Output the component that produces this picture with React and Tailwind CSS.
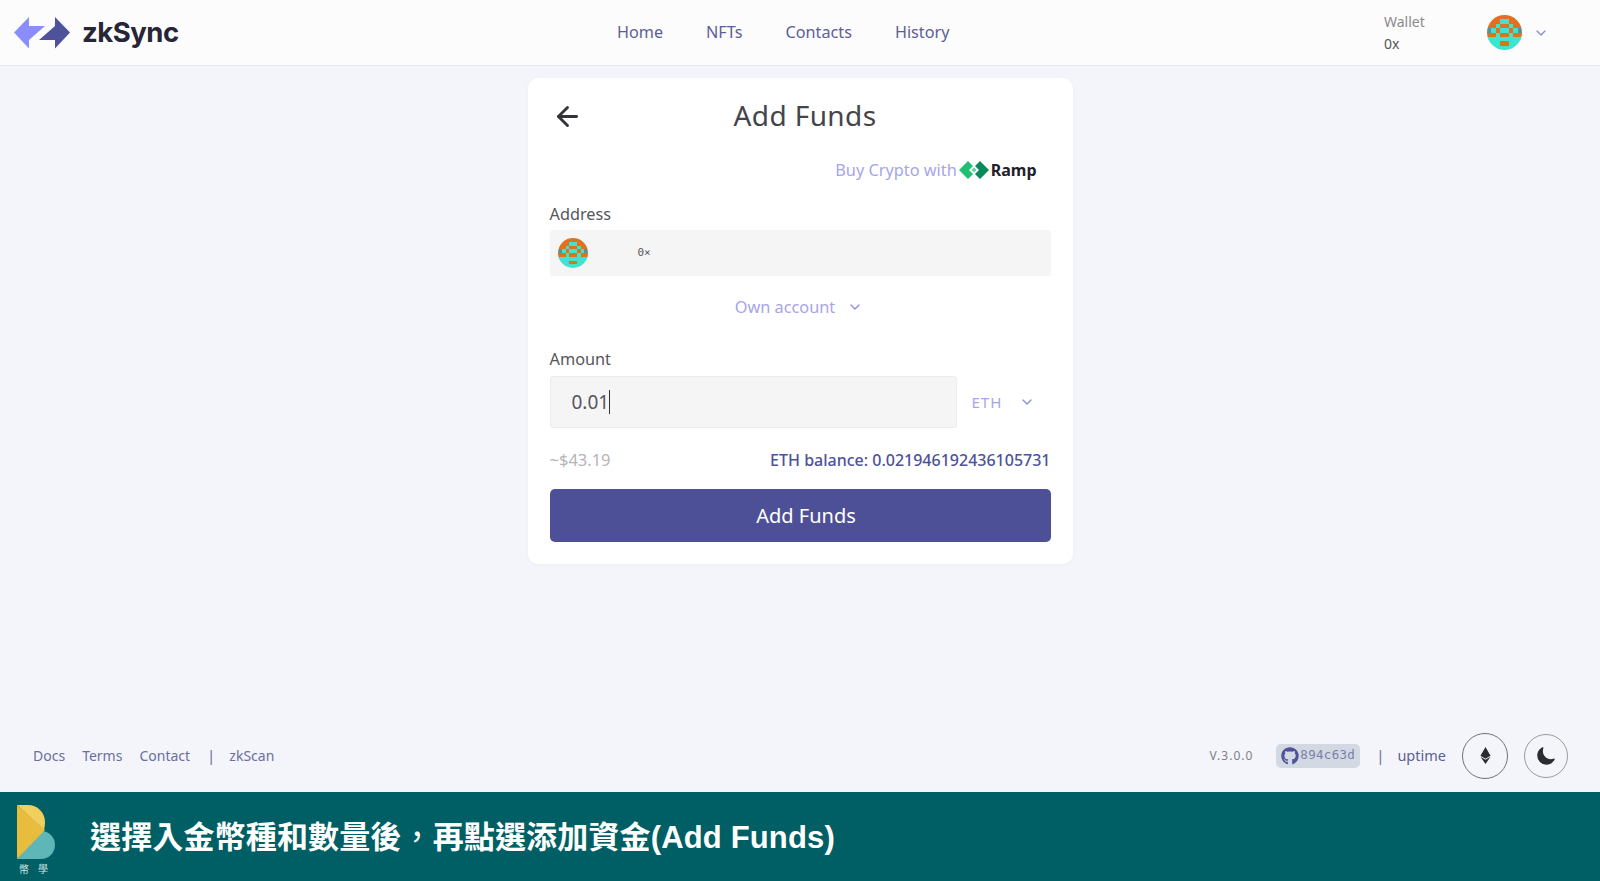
import { ArrowLeft, ChevronDown } from "lucide-react";
import { FaEthereum, FaGithub } from "react-icons/fa";
import { IoMoon } from "react-icons/io5";

const sans = "font-['Noto_Sans',sans-serif]";

const ICON_ROWS = [
  "OOOOOOOO",
  "OOOTTOOO",
  "OOTOOTOO",
  "GTOTTOTG",
  "OOTOOTOO",
  "TTTTTTTT",
  "TTTOOTTT",
  "TTTTTTTT",
];
const ICON_COLORS = { O: "#dd7320", T: "#3fe3cf", G: "#5f8f92" };

const Identicon = ({ className }) => (
  <svg viewBox="0 0 8 8" className={className} shapeRendering="crispEdges">
    <defs>
      <clipPath id="identicon-clip">
        <circle cx="4" cy="4" r="4" />
      </clipPath>
    </defs>
    <g clipPath="url(#identicon-clip)">
      {ICON_ROWS.map((row, y) =>
        row.split("").map((c, x) => (
          <rect key={`${x}-${y}`} x={x} y={y} width="1.02" height="1.02" fill={ICON_COLORS[c]} />
        ))
      )}
    </g>
  </svg>
);

const ZkLogo = () => (
  <svg viewBox="0 0 58 33" className="w-[58px] h-[33px]">
    <path d="M1 16.5 16 1v9h16L16 24v8.5z" fill="#8c8dfc" />
    <path d="M57 16.5 42 1v9L26 24h16v8.5z" fill="#4e529a" />
  </svg>
);

const RampLogo = () => (
  <svg viewBox="0 0 30 18" className="w-[30px] h-[18px]">
    <path d="M9 0 0 9l9 9 5-5-4-4 4-4z" fill="#21bf73" />
    <path d="M21 0l9 9-9 9-5-5 4-4-4-4z" fill="#0a8a5a" />
    <path d="M15 6.5l2.5 2.5-2.5 2.5-2.5-2.5z" fill="#5fd69c" />
  </svg>
);

const BanklessLogo = () => (
  <svg viewBox="0 0 38 54" className="w-[38px] h-[54px]">
    <path d="M0 54 24 26a14 14 0 0 1 0 28z" fill="#5fb6b6" />
    <path d="M0 0h11a17 17 0 0 1 17 17q0 4-1 8z" fill="#f0cf5e" />
    <path d="M0 0l28 25L0 54z" fill="#e8bc3c" />
  </svg>
);

const NavLink = ({ children }) => (
  <a className="text-[16.2px] text-[#5d6095]">{children}</a>
);

const FooterLink = ({ children, className = "" }) => (
  <a className={`text-[14px] text-[#6c6f9c] ${className}`}>{children}</a>
);

const Field = ({ children, className }) => (
  <div className={`bg-[#f5f5f5] rounded-[3px] flex items-center ${className}`}>{children}</div>
);

export default function App() {
  return (
    <div className={`min-h-screen flex flex-col bg-[#f3f5fa] ${sans}`}>
      <header className="h-[66px] shrink-0 flex items-center bg-[#fcfcfd] border-b border-[#e4e6ec]">
        <div className="w-[617px] shrink-0 flex items-center pl-[13px] gap-[11px]">
          <ZkLogo />
          <span className="font-['Inter',sans-serif] font-bold text-[27.5px] tracking-[-0.5px] text-[#262636]">
            zkSync
          </span>
        </div>
        <nav className="flex items-center gap-[43px]">
          <NavLink>Home</NavLink>
          <NavLink>NFTs</NavLink>
          <NavLink>Contacts</NavLink>
          <NavLink>History</NavLink>
        </nav>
        <div className="ml-auto flex items-center pr-[51px]">
          <div className="flex flex-col text-[14px] leading-[22px] w-[103px]">
            <span className="text-[#8a8a8a]">Wallet</span>
            <span className="text-[#555]">0x</span>
          </div>
          <Identicon className="w-[35px] h-[35px]" />
          <ChevronDown className="w-[16px] h-[16px] ml-[11px] text-[#8c8dd8]" />
        </div>
      </header>

      <main className="flex-1 flex flex-col items-center pt-[12px]">
        <div className="w-[545px] bg-white rounded-[10px] px-[22px] pt-[14px] pb-[22px] shadow-[0_1px_4px_rgba(40,50,90,0.04)]">
          <div className="flex items-center h-[46px]">
            <ArrowLeft className="w-[31px] h-[31px] ml-[2px] mt-[2px] text-[#33343a]" strokeWidth={2.2} />
            <h1 className="text-[28px] font-normal tracking-[0.4px] text-[#44454a] ml-[151px]">Add Funds</h1>
          </div>
          <div className="flex items-center justify-end mt-[20px] pr-[14px] h-[24px]">
            <span className="text-[16.3px] text-[#a6a5e8]">Buy Crypto with</span>
            <span className="ml-[2px]">
              <RampLogo />
            </span>
            <span className="ml-[2px] text-[16px] font-bold text-[#1f2028]">Ramp</span>
          </div>
          <label className="block mt-[20px] mb-[4px] text-[16.3px] leading-[24px] text-[#55565c]">Address</label>
          <Field className="h-[46px] pl-[8px]">
            <Identicon className="w-[30px] h-[30px]" />
            <span className="ml-[50px] font-['DejaVu_Sans_Mono',monospace] text-[11px] text-[#555]">0×</span>
          </Field>
          <div className="flex items-center justify-center mt-[19px] h-[24px] pr-[2px]">
            <span className="text-[16.3px] text-[#a6a5e8]">Own account</span>
            <ChevronDown className="w-[16px] h-[16px] ml-[12px] text-[#8c8dd8]" />
          </div>
          <label className="block mt-[28px] text-[16.3px] leading-[24px] text-[#55565c]">Amount</label>
          <div className="flex items-center mt-[5px]">
            <Field className="w-[407px] h-[52px] pl-[21px] border border-[#ececec]">
              <span className="text-[19px] text-[#55565c] border-r border-[#333] leading-[24px]">0.01</span>
            </Field>
            <span className="ml-[15px] text-[15px] tracking-[1px] text-[#a6a5e8]">ETH</span>
            <ChevronDown className="w-[16px] h-[16px] ml-[17px] text-[#8c8dd8]" />
          </div>
          <div className="flex items-center justify-between mt-[20px] h-[24px]">
            <span className="text-[16.5px] text-[#b5b5b8]">~$43.19</span>
            <span className="text-[16px] font-medium text-[#4e529a]">ETH balance: 0.021946192436105731</span>
          </div>
          <button className="w-full h-[53px] mt-[17px] pl-[12px] rounded-[5px] bg-[#4e5097] text-white text-[20px]">
            Add Funds
          </button>
        </div>
      </main>

      <footer className="h-[60px] shrink-0 flex items-center pl-[33px] pr-[32px] pb-[13px]">
        <div className="flex items-center gap-[17px]">
          <FooterLink>Docs</FooterLink>
          <FooterLink>Terms</FooterLink>
          <FooterLink>Contact</FooterLink>
          <span className="text-[15px] text-[#6c6f9c]">|</span>
          <FooterLink className="-ml-[3px]">zkScan</FooterLink>
        </div>
        <div className="ml-auto flex items-center">
          <span className="text-[12px] tracking-[1px] text-[#7d7f88]">V.3.0.0</span>
          <span className="ml-[23px] h-[24px] px-[5px] flex items-center gap-[1px] rounded-[5px] bg-[#d3d9e3]">
            <FaGithub className="w-[18px] h-[18px] text-[#4e529a]" />
            <span className="font-['DejaVu_Sans_Mono',monospace] text-[12.5px] tracking-[0.3px] text-[#7b80a8]">894c63d</span>
          </span>
          <span className="ml-[16px] text-[15px] text-[#6c6f9c]">|</span>
          <span className="ml-[13px] text-[14.5px] text-[#5d6095]">uptime</span>
          <span className="ml-[16px] w-[46px] h-[46px] rounded-full border border-[#6f7075] flex items-center justify-center">
            <FaEthereum className="w-[17px] h-[17px] text-[#2a2b33]" />
          </span>
          <span className="ml-[16px] w-[44px] h-[44px] rounded-full border border-[#9a9ba0] flex items-center justify-center">
            <IoMoon className="w-[20px] h-[20px] text-[#2a2b33]" />
          </span>
        </div>
      </footer>

      <div className="h-[89px] shrink-0 flex items-center bg-[#005f64]">
        <div className="w-[90px] shrink-0 flex flex-col pl-[17px] pt-[6px]">
          <BanklessLogo />
          <span className="mt-[4px] pl-[2px] text-[10px] leading-[12px] tracking-[9px] whitespace-nowrap text-[#cfe4e4] font-['Noto_Sans_CJK_TC',sans-serif]">幣學</span>
        </div>
        <p className="mt-[4px] font-['Liberation_Sans','Noto_Sans_CJK_TC',sans-serif] font-bold text-[31px] tracking-[0.15px] text-white">
          選擇入金幣種和數量後<span className="font-normal">，</span>再點選添加資金(Add Funds)
        </p>
      </div>
    </div>
  );
}
